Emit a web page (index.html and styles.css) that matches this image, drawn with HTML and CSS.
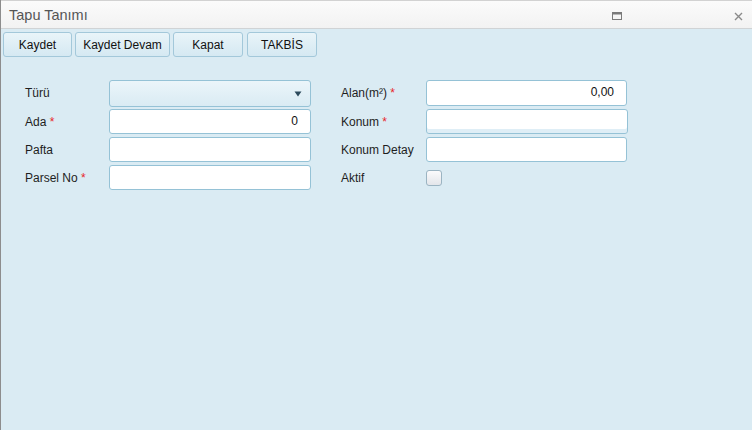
FILE: index.html
```html
<!DOCTYPE html>
<html lang="tr">
<head>
<meta charset="utf-8">
<title>Tapu Tanımı</title>
<link rel="stylesheet" href="styles.css">
</head>
<body>
<div class="window">
  <div class="titlebar">
    <span class="title">Tapu Tanımı</span>
    <div class="tools">
      <svg class="tool-max" width="10" height="8" viewBox="0 0 10 8"><rect x="0.5" y="0.5" width="9" height="7" fill="none" stroke="#7a7a7a" stroke-width="1"/><rect x="0" y="0" width="10" height="2.5" fill="#7a7a7a"/></svg>
      <svg class="tool-close" width="9" height="9" viewBox="0 0 9 9"><path d="M1 1 L8 8 M8 1 L1 8" stroke="#8a8a8a" stroke-width="1.4" fill="none"/></svg>
    </div>
  </div>
  <div class="toolbar">
    <button class="btn btn-kaydet">Kaydet</button>
    <button class="btn btn-devam">Kaydet Devam</button>
    <button class="btn btn-kapat">Kapat</button>
    <button class="btn btn-takbis">TAKBİS</button>
  </div>
  <div class="form">
    <label class="lbl">Türü</label>
    <div class="select"><svg class="arrow" width="8" height="6" viewBox="0 0 8 6"><polygon points="0.5,0.5 7.5,0.5 4,5.5" fill="#2c4a5c"/></svg></div>
    <span></span>
    <label class="lbl">Alan(m²) <span class="req">*</span></label>
    <div class="input num">0,00</div>

    <label class="lbl">Ada <span class="req">*</span></label>
    <div class="input num">0</div>
    <span></span>
    <label class="lbl">Konum <span class="req">*</span></label>
    <div class="input konum"></div>

    <label class="lbl">Pafta</label>
    <div class="input"></div>
    <span></span>
    <label class="lbl">Konum Detay</label>
    <div class="input"></div>

    <label class="lbl">Parsel No <span class="req">*</span></label>
    <div class="input"></div>
    <span></span>
    <label class="lbl">Aktif</label>
    <div class="check-cell"><span class="checkbox"></span></div>
  </div>
</div>
</body>
</html>
```
FILE: styles.css
```css
html, body {
  margin: 0;
  padding: 0;
}
body {
  width: 752px;
  height: 430px;
  overflow: hidden;
  font-family: "Liberation Sans", Arial, sans-serif;
  font-size: 12px;
  color: #1e1e1e;
  background: #daebf3;
}
.window {
  height: 430px;
  box-sizing: border-box;
  border-left: 1px solid #8d8d8d;
  background: #daebf3;
}
.titlebar {
  height: 29px;
  box-sizing: border-box;
  border-top: 1px solid #d2d2d2;
  border-bottom: 1px solid #d0d3d5;
  background: linear-gradient(#fbfbfb, #f2f2f2);
  display: flex;
  align-items: center;
  padding: 0 9px 0 8px;
}
.title {
  font-size: 14.5px;
  color: #555;
  flex: 1;
  margin-top: 1px;
}
.tools {
  display: flex;
  align-items: center;
  gap: 112px;
  margin-top: 3px;
}
.toolbar {
  display: flex;
  gap: 3px;
  padding: 3px 0 0 2px;
  height: 25px;
}
.btn {
  height: 25px;
  box-sizing: border-box;
  border: 1px solid #a3c8da;
  border-radius: 3px;
  background: linear-gradient(#e9f4f9, #d5e9f2);
  font-family: "Liberation Sans", Arial, sans-serif;
  font-size: 12px;
  color: #111;
  padding: 0 6px;
  margin: 0;
}
.btn-kaydet { width: 69px; }
.btn-devam { width: 95px; }
.btn-kapat { width: 70px; }
.btn-takbis { width: 70px; margin-left: 1px; }
.form {
  display: grid;
  grid-template-columns: 84px 202px 30px 85px 201px;
  grid-template-rows: 26px 25px 25px 25px;
  row-gap: 3px;
  padding-left: 24px;
  margin-top: 23px;
  align-items: center;
}
.lbl {
  color: #1e1e1e;
  font-size: 12px;
  line-height: 14px;
}
.req { color: #e8262a; }
.input, .select {
  box-sizing: border-box;
  height: 100%;
  border: 1px solid #95c2d6;
  border-radius: 3px;
  background: #fff;
  font-size: 12px;
  line-height: 23px;
  padding: 0 12px;
  color: #111;
}
.num { text-align: right; }
.konum {
  box-shadow: inset 0 -4px 0 #dfeef6;
  margin-right: -1px;
}
.select {
  height: 27px;
  align-self: start;
  background: linear-gradient(#ebf5fa, #d9ebf3);
  display: flex;
  align-items: center;
  justify-content: flex-end;
  padding-right: 8px;
}
.arrow {
  display: block;
  margin-top: 1px;
}
.check-cell {
  display: flex;
  align-items: center;
  height: 100%;
}
.checkbox {
  width: 16px;
  height: 16px;
  box-sizing: border-box;
  border: 1px solid #9bb4c2;
  border-radius: 3px;
  background: linear-gradient(#fbfbfc, #e3e6ea);
}
```
